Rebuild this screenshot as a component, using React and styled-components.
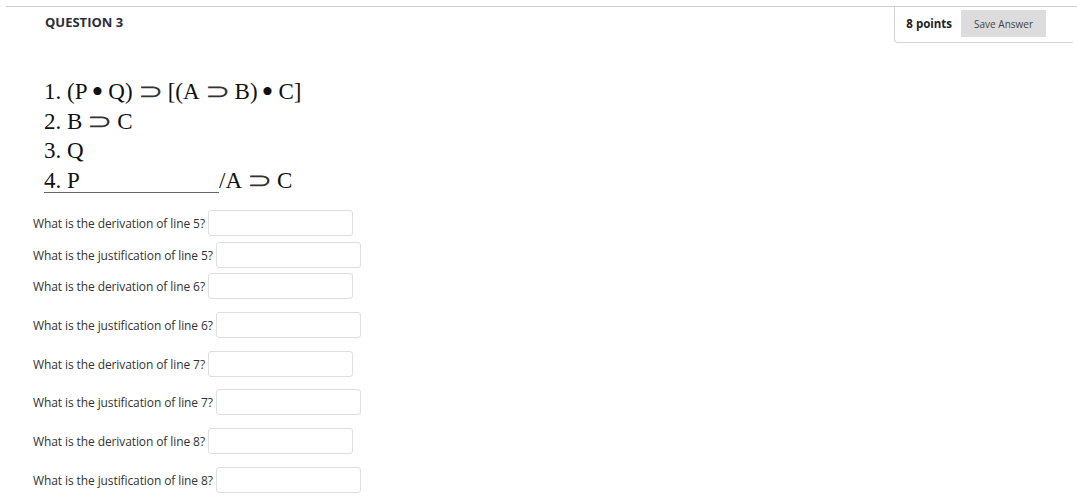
import React from 'react';
import styled, { createGlobalStyle } from 'styled-components';

const GlobalStyle = createGlobalStyle`
  body {
    margin: 0;
    background: #fff;
    font-family: "Open Sans", "Liberation Sans", sans-serif;
    color: #333;
  }
`;

const Question = styled.div`
  margin: 6px 0 0 6px;
  border-top: 1px solid #cfcfcf;
`;

const Header = styled.div`
  display: flex;
  justify-content: space-between;
  align-items: flex-start;
`;

const Title = styled.h3`
  margin: 0;
  padding: 6px 0 0 39px;
  font-size: 13px;
  line-height: 18px;
  font-weight: 700;
  color: #2d2d3a;
`;

const PointsBox = styled.div`
  display: flex;
  align-items: center;
  gap: 9px;
  margin-right: 4px;
  padding: 3px 27px 5px 10px;
  border-left: 1px solid #d4d4d4;
  border-bottom: 1px solid #d4d4d4;
  border-bottom-left-radius: 4px;
`;

const Points = styled.span`
  font-size: 11.5px;
  font-weight: 700;
  color: #222;
  margin-left: 1px;
`;

const SaveButton = styled.button`
  height: 27px;
  padding: 0 13px;
  border: none;
  border-radius: 1px;
  background: #dcdcdc;
  font-family: "Open Sans", "Liberation Sans", sans-serif;
  font-size: 10px;
  color: #444;
`;

const Formula = styled.div`
  margin: 34px 0 0 38px;
  font-family: "Liberation Serif", "DejaVu Serif", serif;
  font-size: 23px;
  line-height: 29.6px;
  color: #111;
`;

const Line = styled.div`
  white-space: pre;
`;

const Bullet = styled.span`
  display: inline-block;
  margin: 0 5px 0 4px;
  font-size: 34px;
  line-height: 22px;
  vertical-align: -4px;
`;

const Hook = styled.span`
  display: inline-block;
  margin: 0 8px 0 7px;
  font-family: "DejaVu Sans", sans-serif;
  font-size: 24px;
  font-weight: 200;
  line-height: 22px;
  color: #333;
  transform: scale(1.25, 0.95);
`;

const Premise = styled.span`
  display: inline-block;
  width: 175px;
  line-height: 23px;
  border-bottom: 1px solid #666;
  vertical-align: baseline;
`;

const Rows = styled.div`
  margin: 15px 0 0 27px;
`;

const Row = styled.div`
  display: flex;
  align-items: center;
  gap: 3px;
  margin-top: ${(p) => p.$space}px;
`;

const Label = styled.label`
  font-size: 12px;
  color: #333;
  letter-spacing: -0.1px;
`;

const Field = styled.input`
  box-sizing: border-box;
  width: 145px;
  height: 26px;
  border: 1px solid #dedede;
  border-radius: 3px;
  background: #fff;
  outline: none;
`;

const questions = [
  ['derivation', 5, 0],
  ['justification', 5, 6],
  ['derivation', 6, 5],
  ['justification', 6, 13],
  ['derivation', 7, 13],
  ['justification', 7, 12],
  ['derivation', 8, 13],
  ['justification', 8, 13],
];

const Dot = () => <Bullet>•</Bullet>;
const Sup = () => <Hook>⊃</Hook>;

export default function App() {
  return (
    <>
      <GlobalStyle />
      <Question>
        <Header>
          <Title>QUESTION 3</Title>
          <PointsBox>
            <Points>8 points</Points>
            <SaveButton>Save Answer</SaveButton>
          </PointsBox>
        </Header>

        <Formula>
          <Line>
            1. (P<Dot />Q)<Sup />[(A<Sup />B)<Dot />C]
          </Line>
          <Line>
            2. B<Sup />C
          </Line>
          <Line>3. Q</Line>
          <Line>
            <Premise>4. P</Premise>/A<Sup />C
          </Line>
        </Formula>

        <Rows>
          {questions.map(([kind, n, space]) => (
            <Row key={kind + n} $space={space}>
              <Label>What is the {kind} of line {n}?</Label>
              <Field type="text" />
            </Row>
          ))}
        </Rows>
      </Question>
    </>
  );
}
